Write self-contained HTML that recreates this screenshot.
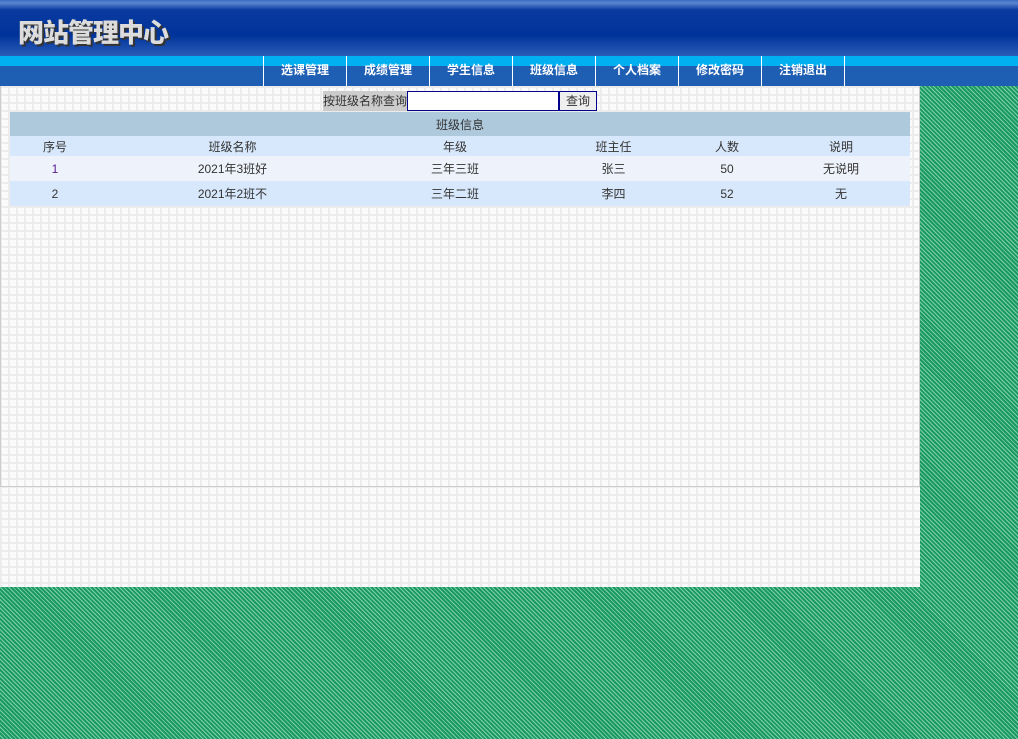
<!DOCTYPE html>
<html><head><meta charset="utf-8"><style>
*{margin:0;padding:0;box-sizing:border-box}
body{width:1018px;height:739px;overflow:hidden;font-family:"Liberation Sans","Noto Sans CJK SC",sans-serif;font-size:12px;color:#333;
background:repeating-linear-gradient(45deg,#1a9a62 0,#1a9a62 2px,#7fd0a8 2px,#7fd0a8 3px);}
.hd{position:absolute;left:0;top:0;width:1018px;height:56px;background:linear-gradient(#3a6cc0 0,#5a86d0 3px,#0a3aa0 10px,#003399 35px,#2a5cb8 56px)}
.logo{position:absolute;left:18px;top:13px;font-size:26px;font-weight:900;color:#dcdcdc;letter-spacing:-1px;text-shadow:2px 2px 0 #333;font-family:"Noto Sans CJK SC",sans-serif;line-height:38px}
.nav{position:absolute;left:0;top:56px;width:1018px;height:30px;background:linear-gradient(#00b0f0 0,#00b0f0 10px,#1e5fb4 10px)}
.nav a{position:absolute;top:0;height:30px;width:83px;border-left:1px solid #fff;color:#fff;font-weight:bold;font-size:12px;text-align:center;line-height:29px;text-decoration:none}
.main{position:absolute;left:0;top:86px;width:920px;height:501px;background-color:#fbfbfb;
background-image:linear-gradient(90deg,#ececec 2px,transparent 2px),linear-gradient(#ececec 2px,transparent 2px);background-size:8px 8px}
.frame{position:absolute;left:0;top:0;width:920px;height:401px;border:1px solid #ccc;border-top:0}
.srch{position:absolute;top:5px;left:323px;height:20px;display:flex}
.lbl{background:#ccc;width:84px;line-height:20px;font-size:12px}
.inp{width:152px;height:20px;border:1px solid #00008b;background:#fff}
.btn{width:38px;height:20px;border:1px solid #00008b;background:#efefef;text-align:center;line-height:18px;font-size:12px}
table{position:absolute;left:10px;top:26px;width:900px;border-collapse:collapse}
td{text-align:center;padding:0}
</style></head><body>
<div class="hd"><div class="logo">网站管理中心</div></div>
<div class="nav">
<a style="left:263px">选课管理</a><a style="left:346px">成绩管理</a><a style="left:429px">学生信息</a><a style="left:512px">班级信息</a><a style="left:595px">个人档案</a><a style="left:678px">修改密码</a><a style="left:761px">注销退出</a><a style="left:844px;width:1px"></a>
</div>
<div class="main"><div class="frame"></div>
<div class="srch"><div class="lbl">按班级名称查询</div><div class="inp"></div><div class="btn">查询</div></div>
<table>
<tr style="background:#aec8dc;height:24px"><td colspan="6">班级信息</td></tr>
<tr style="background:#d8e8fc;height:20px"><td style="width:90px">序号</td><td style="width:265px">班级名称</td><td style="width:180px">年级</td><td style="width:137px">班主任</td><td style="width:90px">人数</td><td>说明</td></tr>
<tr style="background:#eef2fa;height:25px"><td style="color:#551a8b">1</td><td>2021年3班好</td><td>三年三班</td><td>张三</td><td>50</td><td>无说明</td></tr>
<tr style="background:#d8e8fc;height:25px"><td>2</td><td>2021年2班不</td><td>三年二班</td><td>李四</td><td>52</td><td>无</td></tr>
</table></div>
</body></html>
